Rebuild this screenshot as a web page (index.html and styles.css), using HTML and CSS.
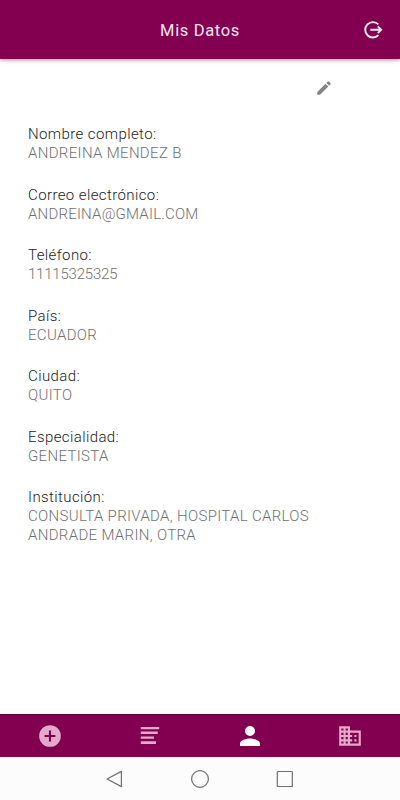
FILE: index.html
```html
<!DOCTYPE html>
<html lang="es">

<head>
    <meta charset="UTF-8">
    <meta name="viewport" content="width=device-width, initial-scale=1.0">
    <title>Mis Datos</title>
    <link rel="stylesheet" href="styles.css">
</head>

<body>
    <header class="topbar">
        <h1 class="title">Mis Datos</h1>
        <svg class="logout" viewBox="0 0 20 20">
            <path d="M15.4 4.4A7.7 7.7 0 1 0 15.4 15.2" />
            <path d="M7.3 9.8H18M14.8 6.4L18.2 9.8L14.8 13.2" />
        </svg>
    </header>

    <main class="content">
        <div class="actions">
            <svg class="edit" viewBox="0 0 24 24">
                <path d="M3 17.25V21h3.75L17.81 9.94l-3.75-3.75L3 17.25zM20.71 7.04a1 1 0 0 0 0-1.41l-2.34-2.34a1 1 0 0 0-1.41 0l-1.83 1.83 3.75 3.75 1.83-1.83z" />
            </svg>
        </div>
        <dl class="datos">
            <div class="dato">
                <dt>Nombre completo:</dt>
                <dd>ANDREINA MENDEZ B</dd>
            </div>
            <div class="dato">
                <dt>Correo electrónico:</dt>
                <dd class="correo">ANDREINA@GMAIL.COM</dd>
            </div>
            <div class="dato">
                <dt>Teléfono:</dt>
                <dd class="numero">11115325325</dd>
            </div>
            <div class="dato">
                <dt>País:</dt>
                <dd>ECUADOR</dd>
            </div>
            <div class="dato">
                <dt>Ciudad:</dt>
                <dd>QUITO</dd>
            </div>
            <div class="dato">
                <dt>Especialidad:</dt>
                <dd>GENETISTA</dd>
            </div>
            <div class="dato">
                <dt>Institución:</dt>
                <dd>CONSULTA PRIVADA, HOSPITAL CARLOS<br>ANDRADE MARIN, OTRA</dd>
            </div>
        </dl>
    </main>

    <nav class="tabs">
        <div class="tab">
            <svg class="tab-icon" viewBox="0 0 24 24">
                <path d="M12 2a10 10 0 1 0 0 20 10 10 0 0 0 0-20zm5 11h-4v4h-2v-4H7v-2h4V7h2v4h4v2z" />
            </svg>
        </div>
        <div class="tab">
            <svg class="tab-icon" viewBox="0 0 24 24">
                <path d="M3.5 3.6h17v2.2h-17zM3.5 7.9h15.7v2.2H3.5zM3.5 12.4h12.2v2.2H3.5zM3.5 16.9h14v2.4h-14z" />
            </svg>
        </div>
        <div class="tab active">
            <svg class="tab-icon person" viewBox="0 0 24 24">
                <path d="M12 12a4 4 0 1 0 0-8 4 4 0 0 0 0 8zm0 2c-2.67 0-8 1.34-8 4v2h16v-2c0-2.66-5.33-4-8-4z" />
            </svg>
        </div>
        <div class="tab">
            <svg class="tab-icon" viewBox="0 0 24 24">
                <path d="M12 7V3H2v18h20V7H12zM6 19H4v-2h2v2zm0-4H4v-2h2v2zm0-4H4V9h2v2zm0-4H4V5h2v2zm4 12H8v-2h2v2zm0-4H8v-2h2v2zm0-4H8V9h2v2zm0-4H8V5h2v2zm10 12h-8v-2h2v-2h-2v-2h2v-2h-2V9h8v10zm-2-8h-2v2h2v-2zm0 4h-2v2h2v-2z" />
            </svg>
        </div>
    </nav>

    <footer class="system">
        <svg viewBox="0 0 20 20"><path d="M16.4 2.4V17.6L2 10z" /></svg>
        <svg viewBox="0 0 20 20"><circle cx="10" cy="10" r="8.4" /></svg>
        <svg viewBox="0 0 20 20"><rect x="2.3" y="2.5" width="15" height="15" rx=".6" /></svg>
    </footer>
</body>

</html>
```
FILE: styles.css
```css
* {
    box-sizing: border-box;
}

body {
    display: flex;
    flex-direction: column;
    height: 100vh;
    margin: 0;
    background-color: #fff;
    font-family: Roboto, "Open Sans", sans-serif;
}

.topbar {
    display: grid;
    grid-template-columns: 1fr auto 1fr;
    align-items: center;
    height: 59px;
    padding: 1px 17px 0;
    background-color: #830051;
    box-shadow: 0 1px 4px rgba(90, 40, 70, .5);
}

.title {
    grid-column: 2;
    margin: 0;
    color: #fbe6f1;
    font-size: 16.5px;
    font-weight: 400;
    letter-spacing: .65px;
}

.logout {
    justify-self: end;
    width: 20px;
    height: 20px;
    fill: none;
    stroke: #fdeaf4;
    stroke-width: 1.9;
}

.content {
    flex: 1;
    padding: 20px 28px 0;
}

.actions {
    display: flex;
    justify-content: flex-end;
    padding-right: 39.5px;
}

.edit {
    width: 18px;
    height: 18px;
    fill: #858585;
}

.datos {
    display: flex;
    flex-direction: column;
    gap: 22.5px;
    margin: 28px 0 0;
    font-size: 15px;
    font-weight: 300;
    line-height: 19px;
}

.dato dt {
    color: #222;
    letter-spacing: .4px;
}

.dato dd {
    margin: 0;
    color: #707070;
    letter-spacing: .33px;
    white-space: nowrap;
}

.dato .correo {
    letter-spacing: .2px;
}

.dato .numero {
    letter-spacing: -.2px;
}

.tabs {
    display: flex;
    height: 43px;
    background-color: #830051;
    border-top: 1px solid #5c0038;
}

.tab {
    display: flex;
    flex: 1;
    align-items: center;
    justify-content: center;
    color: #e3aacb;
}

.active {
    color: #fff;
}

.tab-icon {
    width: 26px;
    height: 26px;
    fill: currentColor;
}

.person {
    width: 30px;
    height: 30px;
}

.system {
    display: flex;
    align-items: center;
    justify-content: center;
    gap: 65px;
    height: 43px;
    background-color: #fcfcfc;
}

.system svg {
    width: 20px;
    height: 20px;
    fill: none;
    stroke: #707070;
    stroke-width: 1.2;
    stroke-linejoin: round;
}
```
